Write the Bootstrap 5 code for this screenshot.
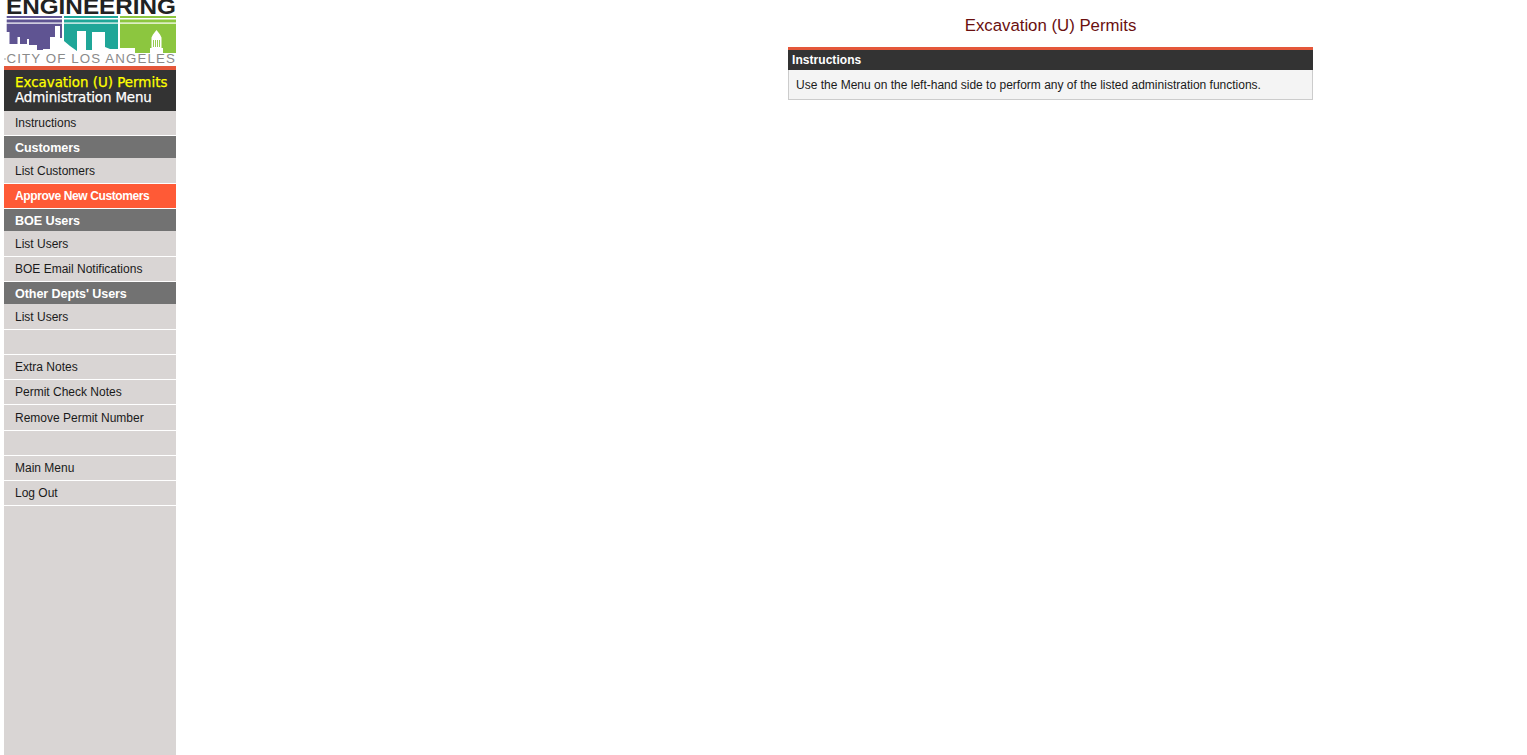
<!DOCTYPE html>
<html lang="en">
<head>
<meta charset="utf-8">
<title>Excavation (U) Permits</title>
<link href="https://cdn.jsdelivr.net/npm/bootstrap@5.3.0/dist/css/bootstrap.min.css" rel="stylesheet">
<style>
html,body{height:100%;}
body{background:#fff;font-family:"Liberation Sans",Arial,sans-serif;font-size:12px;color:#1a1a1a;overflow:hidden;}
.page-wrap{height:755px;padding-left:4px;}
.side-col{width:172px;flex:none;background:#d9d5d4;height:755px;}
.logo-box{display:block;height:66px;background:#fff;}
.logo-box svg{display:block;}
.logo-label{font-family:"Liberation Sans",Arial,sans-serif;}
.menu-head{height:45px;background:#333;border-top:4px solid #e4573a;padding:5px 0 0 11px;font-family:"DejaVu Sans",Verdana,sans-serif;font-size:13.4px;line-height:15px;color:#fff;-webkit-text-stroke:.25px currentColor;}
.menu-head-title{color:#ff0;}
.menu-head-sub{letter-spacing:-.12px;}
.menu-row{display:block;height:25px;line-height:24px;padding-left:11px;border-bottom:1px solid #fff;color:#1a1a1a;text-decoration:none;background:#d9d5d4;}
.menu-tall{height:26px;line-height:26px;}
.menu-sec{height:22px;line-height:24px;padding-left:11px;background:#727272;color:#fff;font-size:12.6px;letter-spacing:-.1px;font-weight:700;}
.menu-hot{background:#ff5a36;color:#fff;font-weight:700;letter-spacing:-.4px;}
.main-col{flex:1 1 auto;padding:15px 0 0 612px;}
.page-title{width:525px;margin:0 0 11px;text-align:center;font-size:16.8px;line-height:21px;font-weight:400;color:#6a0f0f;}
.info-panel{width:525px;border:1px solid #ccc;border-top:0;background:#f4f4f4;}
.info-top{margin:0 -1px;height:23px;border-top:3px solid #e4573a;background:#333;color:#fff;font-weight:700;letter-spacing:.05px;line-height:20px;padding-left:4px;}
.info-text{padding:8px 7px 6px;line-height:15px;height:29px;}
</style>
</head>
<body>
<div class="page-wrap d-flex">
  <nav class="side-col">
    <a class="logo-box" href="#" aria-label="Engineering, City of Los Angeles">
      <svg width="172" height="66" viewBox="0 0 172 66">
        <path fill="#5f5492" d="M2.700 16H58V38H56V26H51V37H46V49H39V50H33V45H25V39H23V44H16V37H13.500V44H5.500V32H2.700Z"/>
        <path fill="#1fa698" d="M60 16H114V49H106L101 47V32H88V50H82V31H73V51L66 46L60 41Z"/>
        <path fill="#8cc63f" d="M116 16H172V53H131V48H116Z"/>
        <g fill="#fff">
          <rect x="2" y="18" width="170" height="1.500"/>
          <rect x="2" y="22.500" width="170" height="1.200"/>
          <path d="M152.500 30L156 34.500L157.500 37.500V48H159V53H146V48H147.500V37.500L149 34.500Z"/>
        </g>
        <path d="M149.500 40V47M151.500 40V47M153.500 40V47M155.500 40V47" stroke="#8cc63f" stroke-width=".9"/>
        <rect x="-1" y="58.500" width="3" height="1" fill="#aaa"/>
        <text class="logo-label" x="2.500" y="63" font-size="12" letter-spacing="1" fill="#8a8a8a" textLength="169.500" lengthAdjust="spacingAndGlyphs">CITY OF LOS ANGELES</text>
        <text class="logo-label" x="2" y="13.500" font-size="21.500" font-weight="700" fill="#222" textLength="170" lengthAdjust="spacingAndGlyphs">ENGINEERING</text>
      </svg>
    </a>
    <div class="menu-head"><div class="menu-head-title">Excavation (U) Permits</div><div class="menu-head-sub">Administration Menu</div></div>
    <a class="menu-row" href="#">Instructions</a>
    <div class="menu-sec">Customers</div>
    <a class="menu-row menu-tall" href="#">List Customers</a>
    <a class="menu-row menu-hot" href="#">Approve New Customers</a>
    <div class="menu-sec">BOE Users</div>
    <a class="menu-row menu-tall" href="#">List Users</a>
    <a class="menu-row" href="#">BOE Email Notifications</a>
    <div class="menu-sec">Other Depts' Users</div>
    <a class="menu-row menu-tall" href="#">List Users</a>
    <div class="menu-row"></div>
    <a class="menu-row" href="#">Extra Notes</a>
    <a class="menu-row" href="#">Permit Check Notes</a>
    <a class="menu-row menu-tall" href="#">Remove Permit Number</a>
    <div class="menu-row"></div>
    <a class="menu-row" href="#">Main Menu</a>
    <a class="menu-row" href="#">Log Out</a>
  </nav>
  <main class="main-col">
    <h1 class="page-title">Excavation (U) Permits</h1>
    <section class="info-panel">
      <div class="info-top">Instructions</div>
      <div class="info-text">Use the Menu on the left-hand side to perform any of the listed administration functions.</div>
    </section>
  </main>
</div>
<script src="https://cdn.jsdelivr.net/npm/bootstrap@5.3.0/dist/js/bootstrap.bundle.min.js"></script>
</body>
</html>
